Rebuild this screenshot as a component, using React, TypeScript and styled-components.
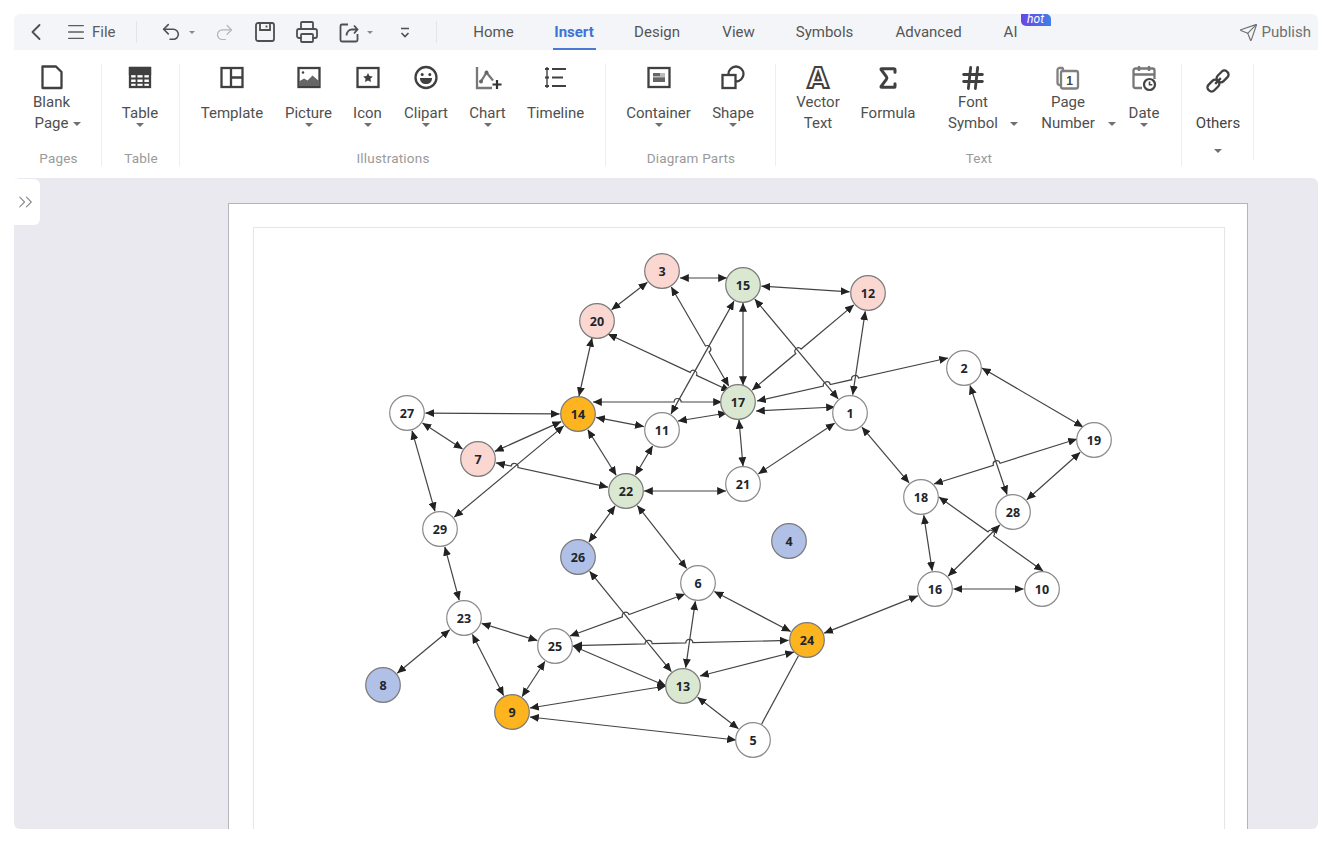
import React from 'react'
import styled, { createGlobalStyle } from 'styled-components'
import { ChevronLeft, ChevronsRight, Hash, Menu, Printer, Redo2, Send, Sigma, Undo2 } from 'lucide-react'

const GlobalStyle = createGlobalStyle`
	html, body {
		margin: 0;
		padding: 0;
		background: #fff;
		font-family: Roboto, "Noto Sans", Arial, sans-serif;
	}
`

// ---- graph data, in page coordinates ----
const ORANGE = '#fdb41f'
const PINK = '#fad8d1'
const GREEN = '#dbe8d1'
const BLUE = '#b1c0e7'
const WHITE = '#ffffff'

const nodes: Record<number, { x: number; y: number; fill: string }> = {
	1: { x: 850, y: 413, fill: WHITE },
	2: { x: 964, y: 368, fill: WHITE },
	3: { x: 662, y: 271, fill: PINK },
	4: { x: 789, y: 541, fill: BLUE },
	5: { x: 753, y: 740, fill: WHITE },
	6: { x: 698, y: 583, fill: WHITE },
	7: { x: 478, y: 459, fill: PINK },
	8: { x: 383, y: 685, fill: BLUE },
	9: { x: 512, y: 712, fill: ORANGE },
	10: { x: 1042, y: 589, fill: WHITE },
	11: { x: 662, y: 430, fill: WHITE },
	12: { x: 868, y: 293, fill: PINK },
	13: { x: 683, y: 686, fill: GREEN },
	14: { x: 578, y: 414, fill: ORANGE },
	15: { x: 743, y: 285, fill: GREEN },
	16: { x: 935, y: 589, fill: WHITE },
	17: { x: 738, y: 402, fill: GREEN },
	18: { x: 921, y: 497, fill: WHITE },
	19: { x: 1094, y: 440, fill: WHITE },
	20: { x: 597, y: 321, fill: PINK },
	21: { x: 743, y: 484, fill: WHITE },
	22: { x: 626, y: 491, fill: GREEN },
	23: { x: 464, y: 618, fill: WHITE },
	24: { x: 807, y: 640, fill: ORANGE },
	25: { x: 555, y: 646, fill: WHITE },
	26: { x: 578, y: 557, fill: BLUE },
	27: { x: 407, y: 413, fill: WHITE },
	28: { x: 1013, y: 512, fill: WHITE },
	29: { x: 440, y: 529, fill: WHITE },
}

type Edge = { a: number; b: number; at?: [number, number, number, number]; plain?: boolean; over?: string[] }

const edges: Edge[] = [
	{ a: 3, b: 15, at: [680, 278, 727, 278] },
	{ a: 20, b: 3 },
	{ a: 3, b: 17, over: ['11-15'] },
	{ a: 15, b: 12 },
	{ a: 15, b: 17, at: [743, 303, 743, 385] },
	{ a: 15, b: 1 },
	{ a: 11, b: 15 },
	{ a: 17, b: 12, over: ['15-1'] },
	{ a: 12, b: 1 },
	{ a: 20, b: 17, at: [608, 334, 730, 391], over: ['11-15'] },
	{ a: 20, b: 14, at: [592, 338, 579, 396] },
	{ a: 14, b: 17, at: [593, 402, 722, 402], over: ['11-15'] },
	{ a: 27, b: 14 },
	{ a: 7, b: 14 },
	{ a: 14, b: 11 },
	{ a: 14, b: 22 },
	{ a: 29, b: 14 },
	{ a: 17, b: 2, at: [757, 401, 948, 358], over: ['15-1', '12-1'] },
	{ a: 17, b: 1, at: [756, 411, 835, 407] },
	{ a: 11, b: 17, at: [678, 421, 727, 413] },
	{ a: 17, b: 21, at: [739, 420, 743, 466] },
	{ a: 22, b: 11 },
	{ a: 27, b: 7 },
	{ a: 27, b: 29 },
	{ a: 7, b: 22, over: ['29-14'] },
	{ a: 22, b: 21, at: [644, 491, 726, 491] },
	{ a: 26, b: 22 },
	{ a: 22, b: 6 },
	{ a: 21, b: 1 },
	{ a: 1, b: 18 },
	{ a: 2, b: 19, at: [982, 368, 1083, 427] },
	{ a: 2, b: 28 },
	{ a: 18, b: 19, at: [934, 484, 1077, 439], over: ['2-28'] },
	{ a: 28, b: 19 },
	{ a: 18, b: 16 },
	{ a: 18, b: 10, at: [939, 497, 1043, 571], over: ['16-28'] },
	{ a: 16, b: 28 },
	{ a: 16, b: 10 },
	{ a: 24, b: 16 },
	{ a: 6, b: 24 },
	{ a: 25, b: 24, over: ['26-13', '13-6'] },
	{ a: 13, b: 24, at: [700, 676, 794, 652] },
	{ a: 5, b: 24, plain: true },
	{ a: 25, b: 6, at: [570, 636, 685, 594], over: ['26-13'] },
	{ a: 13, b: 6 },
	{ a: 23, b: 25 },
	{ a: 9, b: 25 },
	{ a: 25, b: 13, at: [573, 646, 666, 686] },
	{ a: 9, b: 13, at: [530, 708, 666, 686] },
	{ a: 13, b: 5 },
	{ a: 26, b: 13 },
	{ a: 9, b: 5, at: [530, 717, 736, 740] },
	{ a: 23, b: 9 },
	{ a: 8, b: 23 },
	{ a: 29, b: 23 },
]

const segment = (e: Edge) => {
	if (e.at) return e.at
	const A = nodes[e.a]
	const B = nodes[e.b]
	const len = Math.hypot(B.x - A.x, B.y - A.y)
	const ux = (B.x - A.x) / len
	const uy = (B.y - A.y) / len
	const r = e.plain ? 18 : 18.5
	return [A.x + ux * r, A.y + uy * r, B.x - ux * r, B.y - uy * r] as [number, number, number, number]
}

const edgePath = (e: Edge) => {
	const [x1, y1, x2, y2] = segment(e)
	const len = Math.hypot(x2 - x1, y2 - y1)
	const ux = (x2 - x1) / len
	const uy = (y2 - y1) / len
	const hits = (e.over || [])
		.map(key => {
			const other = edges.find(o => `${o.a}-${o.b}` === key)
			if (!other) return 0
			const [x3, y3, x4, y4] = segment(other)
			const d = (x2 - x1) * (y4 - y3) - (y2 - y1) * (x4 - x3)
			return (((x3 - x1) * (y4 - y3) - (y3 - y1) * (x4 - x3)) / d) * len
		})
		.sort((p, q) => p - q)
	let d = `M${x1} ${y1}`
	const R = 3.5
	hits.forEach(t => {
		d += `L${x1 + ux * (t - R)} ${y1 + uy * (t - R)}`
		d += `A${R} ${R} 0 0 1 ${x1 + ux * (t + R)} ${y1 + uy * (t + R)}`
	})
	return `${d}L${x2} ${y2}`
}

// ---- ribbon icons ----
const INK = '#404040'

const Glyph = styled.svg.attrs({ viewBox: '0 0 28 28', fill: 'none' })`
	width: 28px;
	height: 28px;
	stroke: ${INK};
	stroke-width: 2.300;
	display: block;
	flex: none;
`

const BlankPageIcon = () => (
	<Glyph>
		<path d="M4.500 2.500h13.500l5.500 5.500v16H4.500z" strokeLinejoin="round" />
	</Glyph>
)

const TableIcon = () => (
	<Glyph>
		<rect x="4" y="4" width="20" height="19" />
		<rect x="4" y="4" width="20" height="6" fill={INK} />
		<path d="M4 14.500h20M4 18.800h20M10.500 10v13M17.500 10v13" strokeWidth="1.800" />
	</Glyph>
)

const TemplateIcon = () => (
	<Glyph>
		<rect x="3.500" y="4" width="21" height="19" />
		<path d="M13 4v19M13 13.500h11.500" />
	</Glyph>
)

const PictureIcon = () => (
	<Glyph>
		<rect x="3.500" y="4" width="21" height="19" />
		<circle cx="8" cy="8.500" r="1.200" fill={INK} stroke="none" />
		<path d="M4 22v-4.500l5-3 3.500 2 5-5 7 6V22z" fill="#666" stroke="none" />
	</Glyph>
)

const IconIcon = () => (
	<Glyph>
		<rect x="3.500" y="4" width="21" height="19" />
		<path d="M14 9l1.500 3.100 3.300.4-2.400 2.300.6 3.300-3-1.600-3 1.600.6-3.300-2.400-2.300 3.300-.4z" fill={INK} stroke="none" />
	</Glyph>
)

const ClipartIcon = () => (
	<Glyph>
		<circle cx="14" cy="13.500" r="10.500" />
		<circle cx="10.200" cy="10.500" r="1.500" fill={INK} stroke="none" />
		<circle cx="17.800" cy="10.500" r="1.500" fill={INK} stroke="none" />
		<path d="M8 14h12c0 4-2.500 6-6 6s-6-2-6-6z" fill={INK} stroke="none" />
	</Glyph>
)

const ChartIcon = () => (
	<Glyph>
		<path d="M3 3v21h15" stroke="#777" />
		<path d="M7 17.500l5.500-9 6.500 8" stroke="#777" />
		<circle cx="7" cy="17.500" r="2" fill="#666" stroke="none" />
		<circle cx="12.500" cy="8.500" r="2" fill="#666" stroke="none" />
		<path d="M23 16v9M18.500 20.500h9" strokeWidth="2.200" stroke="#333" />
	</Glyph>
)

const TimelineIcon = () => (
	<Glyph>
		<path d="M5 3v21" strokeWidth="1.400" />
		<path d="M3 5h4M3 13.500h4M3 22h4" strokeWidth="2.200" />
		<path d="M10 5h14M10 13.500h11M10 22h14" strokeWidth="2.200" />
	</Glyph>
)

const ContainerIcon = () => (
	<Glyph>
		<rect x="3.500" y="4" width="21" height="19" />
		<rect x="8" y="9" width="12" height="9" fill="#bbb" stroke="none" />
		<rect x="8" y="9" width="7" height="3" fill="#666" stroke="none" />
		<rect x="8" y="13.500" width="12" height="4.500" fill="#666" stroke="none" />
	</Glyph>
)

const ShapeIcon = () => (
	<Glyph>
		<circle cx="17" cy="10" r="7.500" />
		<rect x="3.500" y="11" width="13" height="13" fill="#fff" />
	</Glyph>
)

const VectorGlyph = styled.svg.attrs({ viewBox: '0 0 36 36', fill: 'none' })`
	width: 36px;
	height: 36px;
	margin: -4px -4px -4px -4px;
	display: block;
	flex: none;
`

const LetterA = styled.text`
	font-family: "DejaVu Sans", Arial, sans-serif;
	font-size: 28px;
	font-weight: 700;
	fill: #fff;
	stroke: ${INK};
	stroke-width: 2;
`

const VectorTextIcon = () => (
	<VectorGlyph>
		<LetterA x="18" y="28" textAnchor="middle">A</LetterA>
	</VectorGlyph>
)

const PageDigit = styled.text`
	font-family: "Liberation Sans", Arial, sans-serif;
	font-size: 12px;
	font-weight: 700;
	fill: #444;
	stroke: none;
`

const PageNumberIcon = () => (
	<Glyph>
		<path d="M8 6.500V5a2 2 0 0 0-.5-1H4a2 2 0 0 0-1.500 2v13a2 2 0 0 0 1.500 2h1" transform="translate(1 0)" stroke="#808080" />
		<rect x="7" y="7" width="17" height="17.500" rx="2" stroke="#808080" />
		<PageDigit x="15.500" y="21" textAnchor="middle">1</PageDigit>
	</Glyph>
)

const DateIcon = () => (
	<Glyph>
		<path d="M12 24H5.500A2 2 0 0 1 3.500 22V6.500a2 2 0 0 1 2-2h17a2 2 0 0 1 2 2V15" stroke="#777" />
		<path d="M3.500 10.500h21M9 2v5M19 2v5" stroke="#777" />
		<circle cx="19.500" cy="20.500" r="5.500" strokeWidth="2.200" stroke="#444" />
		<path d="M19.500 17.500v3.300h2.800" strokeWidth="1.600" stroke="#444" />
	</Glyph>
)

const LinkIcon = () => (
	<Glyph>
		<g transform="rotate(-45 14 14)">
			<rect x="1" y="10" width="13" height="8" rx="3.500" />
			<rect x="14" y="10" width="13" height="8" rx="3.500" />
			<path d="M10 14h8" />
		</g>
	</Glyph>
)

// ---- top bar icons ----
const BarGlyph = styled.svg.attrs({ viewBox: '0 0 24 24', fill: 'none' })`
	width: 24px;
	height: 24px;
	stroke: #4f4f4f;
	stroke-width: 1.800;
	flex: none;
`

const SaveIcon = () => (
	<BarGlyph>
		<path d="M5 3h14a2 2 0 0 1 2 2v14a2 2 0 0 1-2 2H5a2 2 0 0 1-2-2V5a2 2 0 0 1 2-2z" />
		<path d="M7 3v7h10V3M13.500 5.500v2" />
	</BarGlyph>
)

const ExportIcon = () => (
	<BarGlyph>
		<path d="M11 4.500H5a1.500 1.500 0 0 0-1.500 1.500v14A1.500 1.500 0 0 0 5 21.500h14a1.500 1.500 0 0 0 1.500-1.500v-6" />
		<path d="M9.500 15.500c.3-3.500 2.500-6 5.500-6h5M17 5.500l3.500 4-3.500 4" />
	</BarGlyph>
)

const CollapseIcon = () => (
	<BarGlyph>
		<path d="M8 8.500h8M8.500 13l3.500 3.500 3.500-3.500" strokeWidth="1.600" />
	</BarGlyph>
)

// ---- page ----
export default function App() {
	return (
		<>
			<GlobalStyle />
			<Screen>
				<MenuBar>
					<BackButton><ChevronLeft size={28} strokeWidth={1.6} /></BackButton>
					<FileButton>
						<Menu size={22} strokeWidth={1.4} />
						File
					</FileButton>
					<BarDivider $left={20} />
					<BarAction $left={23}><Undo2 size={22} strokeWidth={1.7} /></BarAction>
					<SmallCaret $left={7} />
					<BarAction $left={19} $muted><Redo2 size={21} strokeWidth={1.4} /></BarAction>
					<BarAction $left={18}><SaveIcon /></BarAction>
					<BarAction $left={18}><Printer size={24} strokeWidth={1.8} /></BarAction>
					<BarAction $left={18}><ExportIcon /></BarAction>
					<SmallCaret $left={6} />
					<BarAction $left={20}><CollapseIcon /></BarAction>
					<BarDivider $left={19} />
					<Tabs>
						<Tab $w={42} $left={0}>Home</Tab>
						<Tab $w={43} $left={38} $active>Insert</Tab>
						<Tab $w={47} $left={38}>Design</Tab>
						<Tab $w={32} $left={42}>View</Tab>
						<Tab $w={58} $left={41}>Symbols</Tab>
						<Tab $w={68} $left={41}>Advanced</Tab>
						<Tab $w={14} $left={41}>
							AI
							<HotBadge>hot</HotBadge>
						</Tab>
					</Tabs>
					<PublishButton>
						<Send size={19} strokeWidth={1.5} />
						Publish
					</PublishButton>
				</MenuBar>

				<Ribbon>
					<Group $width={87} $pad={19} $title="Pages">
						<Item $w={37}>
							<BlankPageIcon />
							<Label>Blank<br />Page<SideCaret $right={-11} /></Label>
						</Item>
					</Group>
					<Group $width={78} $pad={21} $title="Table">
						<Item $w={36}><TableIcon /><SingleLabel>Table</SingleLabel><UnderCaret /></Item>
					</Group>
					<Group $width={426} $pad={21} $gap={22} $title="Illustrations">
						<Item $w={64}><TemplateIcon /><SingleLabel>Template</SingleLabel></Item>
						<Item $w={45}><PictureIcon /><SingleLabel>Picture</SingleLabel><UnderCaret /></Item>
						<Item $w={29}><IconIcon /><SingleLabel>Icon</SingleLabel><UnderCaret /></Item>
						<Item $w={44}><ClipartIcon /><SingleLabel>Clipart</SingleLabel><UnderCaret /></Item>
						<Item $w={35}><ChartIcon /><SingleLabel>Chart</SingleLabel><UnderCaret /></Item>
						<Item $w={57}><TimelineIcon /><SingleLabel>Timeline</SingleLabel></Item>
					</Group>
					<Group $width={170} $pad={21} $title="Diagram Parts">
						<Item $w={65}><ContainerIcon /><SingleLabel>Container</SingleLabel><UnderCaret /></Item>
						<Item $w={42}><ShapeIcon /><SingleLabel>Shape</SingleLabel><UnderCaret /></Item>
					</Group>
					<Group $width={406} $pad={22} $title="Text">
						<Item $w={42}><VectorTextIcon /><Label>Vector<br />Text</Label></Item>
						<Item $w={56}><Sigma size={28} strokeWidth={2.6} color={INK} /><SingleLabel>Formula</SingleLabel></Item>
						<Item $w={54} $left={9}><Hash size={28} strokeWidth={2.4} color={INK} /><Label>Font<br />Symbol<SideCaret $right={-20} /></Label></Item>
						<Item $w={56} $left={19}><PageNumberIcon /><Label>Page<br />Number<SideCaret $right={-21} /></Label></Item>
						<Item $w={32} $left={11}><DateIcon /><SingleLabel>Date</SingleLabel><UnderCaret /></Item>
					</Group>
					<Group $width={72} $pad={14} $last>
						<OthersItem $w={46}>
							<LinkIcon />
							<OthersLabel>Others</OthersLabel>
							<OthersCaret />
						</OthersItem>
					</Group>
				</Ribbon>

				<Canvas>
					<SideToggle><ChevronsRight size={26} strokeWidth={1.2} /></SideToggle>
					<PageSheet>
						<MarginFrame>
							<Diagram viewBox="254 228 970 620">
								<defs>
									<marker id="head" viewBox="0 0 9 8" refX="8.800" refY="4" markerWidth="9" markerHeight="8" markerUnits="userSpaceOnUse" orient="auto-start-reverse">
										<path d="M0 0L9 4L0 8z" fill="#222" />
									</marker>
								</defs>
								{edges.map(e => (
									<EdgeLine
										key={`${e.a}-${e.b}`}
										d={edgePath(e)}
										markerStart={e.plain ? undefined : 'url(#head)'}
										markerEnd={e.plain ? undefined : 'url(#head)'}
									/>
								))}
								{Object.entries(nodes).map(([id, n]) => (
									<g key={id}>
										<NodeCircle cx={n.x} cy={n.y} r={17.3} fill={n.fill} $plain={n.fill === WHITE} />
										<NodeText x={n.x} y={n.y + 4.5} textAnchor="middle">{id}</NodeText>
									</g>
								))}
							</Diagram>
						</MarginFrame>
					</PageSheet>
				</Canvas>
			</Screen>
		</>
	)
}

const Screen = styled.div`
	width: 1332px;
	height: 844px;
	padding: 14px 14px 15px 14px;
	box-sizing: border-box;
	display: flex;
	flex-direction: column;
	overflow: hidden;
`

const MenuBar = styled.div`
	height: 36px;
	flex: none;
	display: flex;
	align-items: center;
	background: #f4f5f9;
	border-radius: 6px 6px 0 0;
	color: #4f4f4f;
	font-size: 15px;
`

const BackButton = styled.div`
	display: flex;
	margin-left: 8px;
	color: #4f4f4f;
`

const FileButton = styled.div`
	display: flex;
	align-items: center;
	gap: 5px;
	margin-left: 15px;
	color: #5c5c5c;
`

const BarDivider = styled.div<{ $left: number }>`
	width: 1px;
	height: 22px;
	margin-left: ${p => p.$left}px;
	background: #e4e5ea;
`

const BarAction = styled.div<{ $left: number; $muted?: boolean }>`
	display: flex;
	margin-left: ${p => p.$left}px;
	color: ${p => (p.$muted ? '#b4b4b4' : '#4f4f4f')};
`

const SmallCaret = styled.div<{ $left: number }>`
	width: 0;
	height: 0;
	margin-left: ${p => p.$left}px;
	border-left: 3.500px solid transparent;
	border-right: 3.500px solid transparent;
	border-top: 3.500px solid #8a8a8a;
`

const Tabs = styled.div`
	display: flex;
	align-items: center;
	height: 100%;
	margin-left: 36px;
`

const Tab = styled.div<{ $active?: boolean; $w: number; $left: number }>`
	position: relative;
	width: ${p => p.$w}px;
	margin-left: ${p => p.$left}px;
	height: 100%;
	display: flex;
	align-items: center;
	justify-content: center;
	white-space: nowrap;
	font-weight: ${p => (p.$active ? 700 : 400)};
	color: ${p => (p.$active ? '#3e73d6' : '#555')};
	box-sizing: border-box;
	border-bottom: 2px solid ${p => (p.$active ? '#4a78d4' : 'transparent')};
	padding-top: 2px;
`

const HotBadge = styled.span`
	position: absolute;
	left: 17px;
	top: 0;
	width: 30px;
	height: 12px;
	border-radius: 0 5px 0 5px;
	background: linear-gradient(90deg, #6a45e6, #3f7fe8);
	color: #fff;
	font-size: 12px;
	font-style: italic;
	line-height: 11px;
	text-align: center;
`

const PublishButton = styled.div`
	display: flex;
	align-items: center;
	gap: 4px;
	margin-left: auto;
	margin-right: 7px;
	color: #707070;
`

const Ribbon = styled.div`
	height: 128px;
	flex: none;
	display: flex;
	padding-top: 14px;
	box-sizing: border-box;
	color: #4f4f4f;
	font-size: 15px;
`

const Group = styled.div<{ $width: number; $pad: number; $gap?: number; $title?: string; $last?: boolean }>`
	position: relative;
	width: ${p => p.$width}px;
	height: ${p => (p.$last ? '96px' : '102px')};
	box-sizing: border-box;
	flex: none;
	display: flex;
	gap: ${p => p.$gap || 21}px;
	padding-left: ${p => p.$pad}px;
	box-shadow: 1px 0 0 #eeeef2;

	&::after {
		content: '${p => p.$title || ''}';
		position: absolute;
		left: 2px;
		right: 0;
		bottom: -1px;
		text-align: center;
		font-size: 13.500px;
		letter-spacing: 0.2px;
		line-height: 18px;
		color: #9a9a9a;
	}
`

const Item = styled.div<{ $w: number; $left?: number }>`
	position: relative;
	width: ${p => p.$w}px;
	margin-left: ${p => p.$left || 0}px;
	display: flex;
	flex-direction: column;
	align-items: center;
	white-space: nowrap;
`

const OthersItem = styled(Item)`
	padding-top: 3px;
`

const Label = styled.div`
	position: relative;
	margin-top: 0;
	line-height: 21px;
	text-align: center;
`

const SingleLabel = styled(Label)`
	margin-top: 11px;
`

const OthersLabel = styled(Label)`
	margin-top: 18px;
	color: #444;
`

const caret = `
	width: 0;
	height: 0;
	border-left: 4px solid transparent;
	border-right: 4px solid transparent;
	border-top: 4px solid #707070;
`

const UnderCaret = styled.div`
	${caret}
	margin-top: -1px;
`

const OthersCaret = styled.div`
	${caret}
	margin-top: 15px;
`

const SideCaret = styled.span<{ $right: number }>`
	${caret}
	position: absolute;
	right: ${p => p.$right}px;
	bottom: 8px;
`

const Canvas = styled.div`
	position: relative;
	flex: 1;
	min-height: 0;
	background: #e9e9ef;
	border-radius: 6px;
	overflow: hidden;
	padding: 25px 70px 0 214px;
`

const SideToggle = styled.div`
	position: absolute;
	left: 0;
	top: 1px;
	width: 26px;
	height: 46px;
	padding-right: 3px;
	box-sizing: border-box;
	background: #fff;
	border-radius: 0 6px 6px 0;
	display: flex;
	align-items: center;
	justify-content: center;
	color: #8c8c8c;
`

const PageSheet = styled.div`
	width: 1020px;
	height: 720px;
	box-sizing: border-box;
	background: #fff;
	border: 1px solid #b4b4ba;
	padding: 23px 23px 0 24px;
`

const MarginFrame = styled.div`
	width: 972px;
	height: 100%;
	box-sizing: border-box;
	border: 1px solid #e6e6e8;
`

const Diagram = styled.svg`
	display: block;
	width: 970px;
	height: 620px;
`

const EdgeLine = styled.path`
	fill: none;
	stroke: #444;
	stroke-width: 1.200;
`

const NodeCircle = styled.circle<{ $plain: boolean }>`
	stroke: ${p => (p.$plain ? '#8a8a8a' : '#7a7a7a')};
	stroke-width: 1.200;
`

const NodeText = styled.text`
	font-family: "Open Sans", "Noto Sans", sans-serif;
	font-size: 12.500px;
	font-weight: 700;
	fill: #22252c;
`
